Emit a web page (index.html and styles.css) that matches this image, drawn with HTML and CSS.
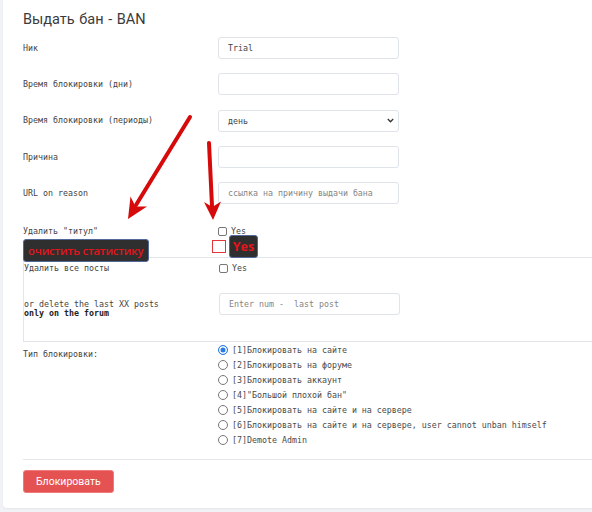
FILE: index.html
```html
<!DOCTYPE html>
<html lang="ru">
<head>
    <meta charset="UTF-8">
    <meta name="viewport" content="width=device-width, initial-scale=1.0">
    <title>Выдать бан</title>
    <link rel="stylesheet" href="styles.css">
</head>
<body>
<div class="card">
    <h2 class="card-title">Выдать бан - BAN</h2>

    <form class="ban-form">
        <div class="form-row">
            <label class="form-label">Ник</label>
            <input class="field" type="text" value="Trial">
        </div>
        <div class="form-row">
            <label class="form-label">Время блокировки (дни)</label>
            <input class="field" type="text">
        </div>
        <div class="form-row">
            <label class="form-label">Время блокировки (периоды)</label>
            <div class="field select">
                <span>день</span>
                <svg width="7" height="5" viewBox="0 0 7 5"><path d="M0.8 1 L3.5 3.8 L6.2 1" fill="none" stroke="#333" stroke-width="1.3"/></svg>
            </div>
        </div>
        <div class="form-row">
            <label class="form-label">Причина</label>
            <input class="field" type="text">
        </div>
        <div class="form-row">
            <label class="form-label">URL on reason</label>
            <input class="field" type="text" placeholder="ссылка на причину выдачи бана">
        </div>

        <div class="check-row">
            <label class="form-label">Удалить "титул"</label>
            <label class="check"><input class="checkbox" type="checkbox">Yes</label>
        </div>

        <div class="posts-box">
            <div class="check-row">
                <label class="form-label">Удалить все посты</label>
                <label class="check"><input class="checkbox" type="checkbox">Yes</label>
            </div>
            <div class="posts-row">
                <label class="form-label">or delete the last XX posts<br><b>only on the forum</b></label>
                <input class="field" type="text" placeholder="Enter num -  last post">
            </div>
        </div>

        <div class="type-row">
            <label class="form-label">Тип блокировки:</label>
            <div class="radio-list">
                <label class="radio-item"><input class="radio" type="radio" name="type" checked>[1]Блокировать на сайте</label>
                <label class="radio-item"><input class="radio" type="radio" name="type">[2]Блокировать на форуме</label>
                <label class="radio-item"><input class="radio" type="radio" name="type">[3]Блокировать аккаунт</label>
                <label class="radio-item"><input class="radio" type="radio" name="type">[4]"Большой плохой бан"</label>
                <label class="radio-item"><input class="radio" type="radio" name="type">[5]Блокировать на сайте и на сервере</label>
                <label class="radio-item"><input class="radio" type="radio" name="type">[6]Блокировать на сайте и на сервере, user cannot unban himself</label>
                <label class="radio-item"><input class="radio" type="radio" name="type">[7]Demote Admin</label>
            </div>
        </div>

        <hr class="divider">
        <button class="btn-danger" type="button">Блокировать</button>
    </form>
</div>

<!-- red arrows drawn over the form -->
<svg class="arrows" width="592" height="512" viewBox="0 0 592 512">
    <line x1="190" y1="117" x2="136" y2="205" stroke="#d60a0a" stroke-width="4" stroke-linecap="round"/>
    <polygon points="128,219 130.5,196.5 135.5,206.5 147,206.5" fill="#d60a0a"/>
    <line x1="209" y1="143" x2="212" y2="206" stroke="#d60a0a" stroke-width="4" stroke-linecap="round"/>
    <polygon points="213,220 204,202 212.3,207 221,201.5" fill="#d60a0a"/>
</svg>

<div class="note note-stats">очистить статистику</div>
<div class="note note-yes">Yes</div>
<span class="note-box"></span>
</body>
</html>
```

FILE: styles.css
```css
html, body {
    height: 512px;
    overflow: hidden;
}

body {
    margin: 0;
    position: relative;
    background-color: #f0f2f5;
    font-family: "DejaVu Sans Mono", monospace;
    font-size: 8.3px;
    color: #444;
}

.card {
    margin-left: 3px;
    width: 640px;
    padding: 10px 20px 15px;
    background-color: #fff;
    border-radius: 0 0 0 4px;
    box-shadow: 0 1px 2px rgba(0, 0, 0, 0.05);
}

.card-title {
    margin: 0;
    font-family: Roboto, sans-serif;
    font-weight: 400;
    font-size: 14.5px;
    line-height: 20px;
    color: #3b3b3b;
    word-spacing: 1px;
}

.form-row {
    display: flex;
    align-items: center;
    height: 36.3px;
}

.form-label {
    width: 195px;
    flex-shrink: 0;
    line-height: 9px;
}

.form-label b {
    color: #222;
}

.field {
    box-sizing: border-box;
    width: 181px;
    height: 22px;
    margin: 0;
    padding: 0 9px;
    border: 1px solid #dfe3ea;
    border-radius: 3px;
    background-color: #fff;
    font-family: "DejaVu Sans Mono", monospace;
    font-size: 8.3px;
    color: #444;
    outline: none;
}

.field::placeholder {
    color: #858585;
}

.select {
    display: flex;
    align-items: center;
    justify-content: space-between;
    padding-right: 4px;
}

.check-row {
    display: flex;
    align-items: center;
    height: 20px;
}

.ban-form > .check-row {
    margin-top: 10px;
    margin-bottom: 16px;
}

.check {
    display: flex;
    align-items: center;
    gap: 4px;
    color: #444;
}

.checkbox {
    appearance: none;
    width: 9px;
    height: 9px;
    margin: 0;
    border: 1px solid #777;
    border-radius: 2px;
    background: #fff;
}

.posts-box {
    border: 1px solid #e2e5eb;
    border-right: none;
}

.posts-row {
    display: flex;
    align-items: flex-start;
    height: 63px;
    padding-top: 15px;
    box-sizing: border-box;
}

.posts-row .form-label {
    margin-top: 7px;
}

.type-row {
    display: flex;
    align-items: flex-start;
}

.type-row .form-label {
    margin-top: 8px;
}

.radio-list {
    display: flex;
    flex-direction: column;
}

.radio-item {
    display: flex;
    align-items: center;
    gap: 4px;
    height: 15px;
    color: #4a4a4a;
    white-space: nowrap;
}

.radio {
    appearance: none;
    width: 10px;
    height: 10px;
    margin: 0;
    border: 1px solid #777;
    border-radius: 50%;
    background: #fff;
}

.radio:checked {
    border-color: #2b7be5;
    background: #2b7be5;
    box-shadow: inset 0 0 0 1.5px #fff;
}

.divider {
    margin: 12px 0 0;
    border: none;
    border-top: 1px solid #e6e8ec;
}

.btn-danger {
    margin-top: 10px;
    height: 23px;
    padding: 0 12px;
    border: 1px solid #ee7a7a;
    border-radius: 3px;
    background-color: #e55252;
    font-family: Roboto, sans-serif;
    font-size: 10.5px;
    color: #fff;
}

/* annotations laid over the form */
.arrows {
    position: absolute;
    top: 0;
    left: 0;
    pointer-events: none;
}

.note {
    position: absolute;
    box-sizing: border-box;
    background-color: #2f2f2f;
    border: 1px solid #52699a;
    border-radius: 3px;
    color: #e4141b;
    font-family: "Open Sans", sans-serif;
}

.note-stats {
    left: 23px;
    top: 239px;
    width: 126px;
    height: 23px;
    padding-left: 4px;
    font-size: 11.3px;
    font-weight: 600;
    line-height: 21px;
    letter-spacing: -0.2px;
}

.note-yes {
    left: 229px;
    top: 235px;
    width: 29px;
    height: 23px;
    text-align: center;
    font-weight: bold;
    font-size: 12.5px;
    line-height: 21px;
}

.note-box {
    position: absolute;
    left: 212px;
    top: 240px;
    width: 14px;
    height: 13px;
    box-sizing: border-box;
    border: 1.5px solid #e0353a;
    background: #fff;
}
```
